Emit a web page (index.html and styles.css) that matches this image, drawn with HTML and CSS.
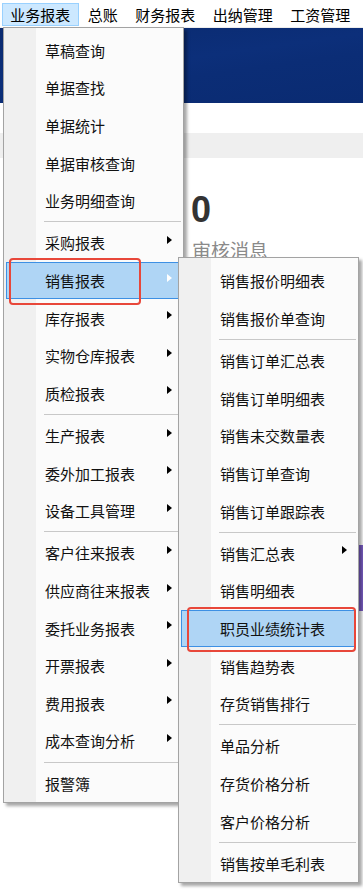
FILE: index.html
```html
<!DOCTYPE html>
<html lang="zh-CN">
<head>
<meta charset="utf-8">
<title>业务报表</title>
<link rel="stylesheet" href="styles.css">
</head>
<body>
<div class="app">
  <div class="menubar">
    <div class="mb-item open">业务报表</div>
    <div class="mb-item">总账</div>
    <div class="mb-item">财务报表</div>
    <div class="mb-item">出纳管理</div>
    <div class="mb-item">工资管理</div>
  </div>
  <div class="banner"></div>
  <div class="gap"></div>
  <div class="tabs"></div>
  <div class="stats">
    <div class="stat"></div>
    <div class="stat">
      <div class="stat-value">0</div>
      <div class="stat-label">审核消息</div>
    </div>
  </div>
  <div class="chart"><div class="chart-bar"></div></div>
</div>

<div class="menu menu-main">
  <div class="mi"><span>草稿查询</span></div>
  <div class="mi"><span>单据查找</span></div>
  <div class="mi"><span>单据统计</span></div>
  <div class="mi"><span>单据审核查询</span></div>
  <div class="mi"><span>业务明细查询</span></div>
  <div class="sep"></div>
  <div class="mi"><span>采购报表</span><i class="arrow"></i></div>
  <div class="mi active mark mark-1"><span>销售报表</span><i class="arrow"></i></div>
  <div class="mi"><span>库存报表</span><i class="arrow"></i></div>
  <div class="mi"><span>实物仓库报表</span><i class="arrow"></i></div>
  <div class="mi"><span>质检报表</span><i class="arrow"></i></div>
  <div class="sep"></div>
  <div class="mi"><span>生产报表</span><i class="arrow"></i></div>
  <div class="mi"><span>委外加工报表</span><i class="arrow"></i></div>
  <div class="mi"><span>设备工具管理</span><i class="arrow"></i></div>
  <div class="sep"></div>
  <div class="mi"><span>客户往来报表</span><i class="arrow"></i></div>
  <div class="mi"><span>供应商往来报表</span><i class="arrow"></i></div>
  <div class="mi"><span>委托业务报表</span><i class="arrow"></i></div>
  <div class="mi"><span>开票报表</span><i class="arrow"></i></div>
  <div class="mi"><span>费用报表</span><i class="arrow"></i></div>
  <div class="mi"><span>成本查询分析</span><i class="arrow"></i></div>
  <div class="sep"></div>
  <div class="mi"><span>报警簿</span></div>
</div>

<div class="menu menu-sub">
  <div class="mi"><span>销售报价明细表</span></div>
  <div class="mi"><span>销售报价单查询</span></div>
  <div class="sep"></div>
  <div class="mi"><span>销售订单汇总表</span></div>
  <div class="mi"><span>销售订单明细表</span></div>
  <div class="mi"><span>销售未交数量表</span></div>
  <div class="mi"><span>销售订单查询</span></div>
  <div class="mi"><span>销售订单跟踪表</span></div>
  <div class="sep"></div>
  <div class="mi"><span>销售汇总表</span><i class="arrow"></i></div>
  <div class="mi"><span>销售明细表</span></div>
  <div class="mi active mark mark-2"><span>职员业绩统计表</span></div>
  <div class="mi"><span>销售趋势表</span></div>
  <div class="mi"><span>存货销售排行</span></div>
  <div class="sep"></div>
  <div class="mi"><span>单品分析</span></div>
  <div class="mi"><span>存货价格分析</span></div>
  <div class="mi"><span>客户价格分析</span></div>
  <div class="sep"></div>
  <div class="mi"><span>销售按单毛利表</span></div>
</div>
</body>
</html>
```

FILE: styles.css
```css
* { box-sizing: border-box; }
html, body { margin: 0; padding: 0; }
body {
  width: 363px;
  height: 892px;
  overflow: hidden;
  background: #fff;
  position: relative;
  font-family: "Noto Sans CJK SC", "Noto Sans", sans-serif;
}

.app { display: flex; flex-direction: column; }

.menubar {
  height: 28px;
  display: flex;
  align-items: flex-start;
  padding: 3px 0 0 1.5px;
  border-bottom: 1px solid #ededed;
  background: #fff;
}
.mb-item {
  height: 23px;
  line-height: 21px;
  padding: 0 7.75px;
  border: 1px solid transparent;
  font-size: 15px;
  color: #000;
  white-space: nowrap;
}
.mb-item.open { background: #cce8ff; border-color: #99d1ff; }

.banner {
  height: 75px;
  background: linear-gradient(172deg, #0a2a6f 0%, #0c2f7a 45%, #0b2d76 60%, #0a2b72 100%);
}
.gap { height: 30px; }
.tabs { height: 25px; background: #efefef; }

.stats {
  display: grid;
  grid-template-columns: 191px 1fr;
  padding-top: 34px;
}
.stat-value {
  font-family: "Liberation Sans", Arial, sans-serif;
  font-weight: bold;
  font-size: 36px;
  line-height: 36px;
  color: #333;
}
.stat-label {
  margin-top: 8px;
  padding-left: 1px;
  font-size: 19px;
  line-height: 28px;
  color: #8a8a8a;
}

.chart {
  display: flex;
  justify-content: flex-end;
  margin-top: 281px;
}
.chart-bar { width: 4px; height: 66px; background: #7b5ec6; }

/* context menus */
.menu {
  position: absolute;
  width: 181px;
  border: 1px solid #a3a3a3;
  padding: 4px 0 0;
  background: linear-gradient(to right, #f0f0f0 0, #f0f0f0 32px, #fbfbfb 32px);
  box-shadow: 3px 3px 3px rgba(0, 0, 0, 0.35);
  display: flex;
  flex-direction: column;
}
.menu-main { left: 3px; top: 26.5px; z-index: 1; }
.menu-sub { left: 178px; top: 257px; z-index: 2; }

.mi {
  position: relative;
  height: 37.6px;
  margin: 0 2px;
  border: 1px solid transparent;
  padding: 0 8px 0 38px;
  display: flex;
  align-items: center;
  justify-content: space-between;
  font-size: 15px;
  color: #111;
  white-space: nowrap;
}
.mi.active { background: #afd5f5; border-color: #3d90e4; }

.arrow {
  display: block;
  width: 0;
  height: 0;
  border-left: 5px solid #000;
  border-top: 4px solid transparent;
  border-bottom: 4px solid transparent;
  margin-bottom: 6px;
}
.mi.active .arrow { border-left-color: #fff; }

.sep {
  height: 4.65px;
  margin: 0 2px 0 40px;
  display: flex;
  align-items: center;
}
.sep::before {
  content: "";
  flex: 1;
  height: 1px;
  background: #c8c8c8;
}

/* red annotation frames */
.mark::after {
  content: "";
  position: absolute;
  border: 2.5px solid #e8473a;
  border-radius: 4px;
  pointer-events: none;
}
.mark-1::after { left: 2.3px; top: -4.3px; width: 127.4px; height: 42.4px; }
.mark-2::after { left: 4.7px; top: -3.4px; width: 165px; height: 41px; }
```
